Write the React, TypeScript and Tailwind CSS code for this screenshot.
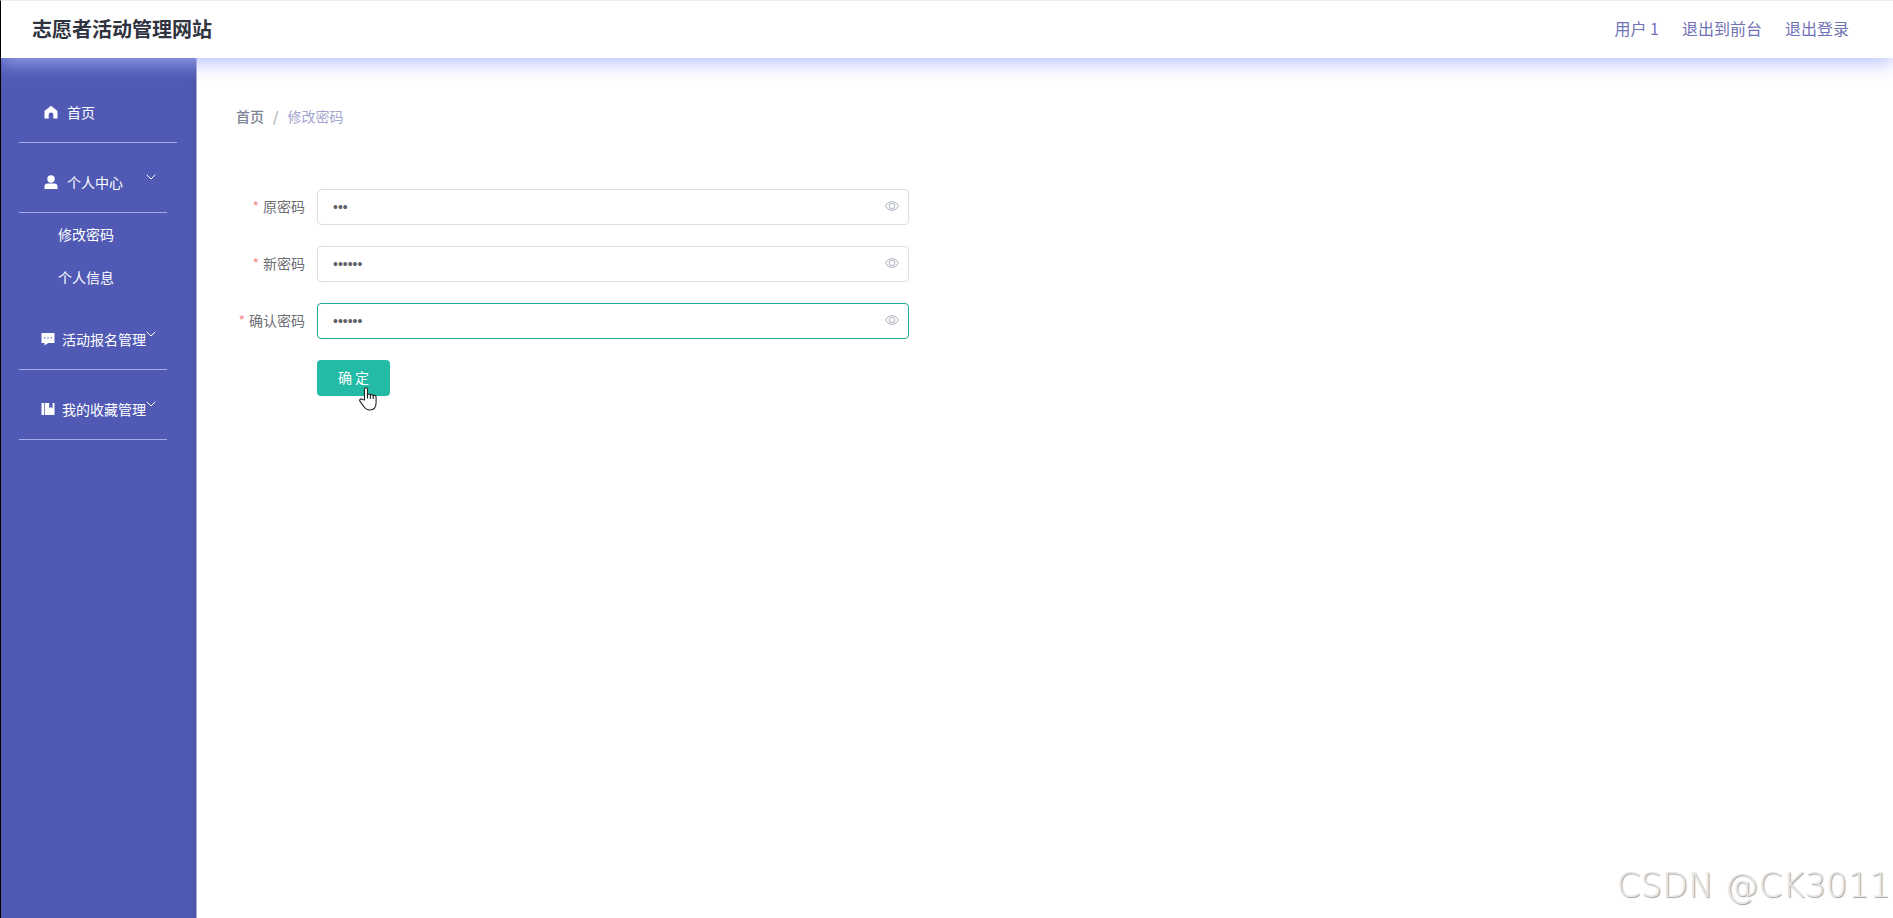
import React, { useState } from "react";
import clsx from "clsx";

const ChevronDown = () => (
  <svg viewBox="0 0 10 6" className="w-[10px] h-[6px]" fill="none" stroke="currentColor">
    <path d="M0.7 0.8 5 5l4.300-4.200" />
  </svg>
);

const HomeIcon = () => (
  <svg viewBox="0 0 14 14" className="size-3.5" fill="currentColor">
    <path d="M7 .8.5 6v7.500h4.200V9.800a2.300 2.300 0 0 1 4.600 0v3.700h4.200V6z" />
  </svg>
);

const UserIcon = () => (
  <svg viewBox="0 0 14 14" className="size-3.5" fill="currentColor">
    <circle cx="7" cy="4" r="3.700" />
    <path d="M.5 14v-2.200a3.200 3.200 0 0 1 3.200-3.200h6.600a3.200 3.200 0 0 1 3.200 3.200V14z" />
  </svg>
);

const CommentIcon = () => (
  <svg viewBox="0 0 14 14" className="size-3.5" fill="currentColor">
    <path
      fillRule="evenodd"
      d="M.5 1h13v10H7.200L3.500 13.500V11h-3zM3.200 5.200v1.200h1.200V5.200zm3.200 0v1.200h1.200V5.200zm3.200 0v1.200h1.200V5.200z"
    />
  </svg>
);

const CollectionIcon = () => (
  <svg viewBox="0 0 14 14" className="size-3.5" fill="currentColor">
    <path d="M.5 1h2.800v12H.5zM4 1h4.200v5.400l1.700-1.300 1.700 1.300V1h1.900v12H4z" />
  </svg>
);

const EyeIcon = () => (
  <svg viewBox="0 0 14 10" className="w-[14px] h-[10px]" fill="none" stroke="currentColor" strokeWidth="1.200">
    <path d="M.6 5C2.200 2 4.400.6 7 .6S11.800 2 13.400 5C11.800 8 9.600 9.400 7 9.400S2.200 8 .6 5z" />
    <circle cx="7" cy="5" r="2.700" />
  </svg>
);

const HandCursor = () => (
  <svg
    viewBox="0 0 18 24"
    className="absolute left-[42px] top-[27px] z-10 w-[18px] h-[24px] pointer-events-none"
    fill="#fff"
    stroke="#222"
    strokeWidth="1.100"
    strokeLinejoin="round"
  >
    <path d="M5.500 13V2.300c0-2 3-2 3 0V7.600c.6-1 2.700-.8 2.900.5.7-.9 2.600-.6 2.800.7.9-.8 2.900-.3 2.900 1.400v5.300c0 4.500-2.300 7.500-6.300 7.500-3.400 0-4.900-1.500-6.500-4.200L.9 14.200c-.9-1.700 1.100-3 2.400-1.700z" />
    <path fill="none" d="M8.500 7.600v4M11.400 8.100v3.700M14.200 8.800v3.200" />
  </svg>
);

const menu = [
  { title: "个人中心", icon: <UserIcon />, wide: true, children: ["修改密码", "个人信息"] },
  { title: "活动报名管理", icon: <CommentIcon />, wide: false, children: [] },
  { title: "我的收藏管理", icon: <CollectionIcon />, wide: false, children: [] },
];

const fields = [
  { id: "oldPassword", label: "原密码", initial: "123" },
  { id: "newPassword", label: "新密码", initial: "123456" },
  { id: "confirmPassword", label: "确认密码", initial: "123456" },
];

function Sidebar() {
  return (
    <aside className="w-[196px] shrink-0 border-r border-[#a3a9df] bg-[#505ab4] pl-[18px] pt-[15px] text-sm text-white shadow-[inset_-5px_0_5px_-3px_rgba(66,78,130,0.35)]">
      <nav>
        <a
          href="#home"
          className="flex h-[70px] w-[158px] items-center gap-[9px] border-b border-[#a3abea] pl-[25px] pt-2"
        >
          <HomeIcon />
          首页
        </a>
        {menu.map((item) => (
          <div key={item.title}>
            <button
              type="button"
              className={clsx(
                "flex h-[70px] w-[148px] items-center border-b border-[#a3abea] pr-[11px] pt-2",
                item.wide ? "gap-[9px] pl-[25px]" : "gap-[7px] pl-[22px]"
              )}
            >
              {item.icon}
              <span className="whitespace-nowrap">{item.title}</span>
              <span className="-ml-2 mb-[9px] grow flex justify-end">
                <ChevronDown />
              </span>
            </button>
            {item.children.length > 0 && (
              <ul className="pb-px pl-[39px]">
                {item.children.map((child) => (
                  <li key={child}>
                    <a href="#child" className="flex h-[43px] items-center pb-0.5">
                      {child}
                    </a>
                  </li>
                ))}
              </ul>
            )}
          </div>
        ))}
      </nav>
    </aside>
  );
}

function PasswordForm() {
  const [values, setValues] = useState(fields.map((f) => f.initial));
  const onChange = (index: number, value: string) => {
    setValues(values.map((v, i) => (i === index ? value : v)));
  };
  return (
    <form className="mt-[62px] flex flex-col gap-[21px]" onSubmit={(e) => e.preventDefault()}>
      {fields.map(({ id, label }, i) => (
        <div key={id} className="flex items-center">
          <label
            htmlFor={id}
            className="w-[81px] pr-3 pb-[3px] text-right text-sm whitespace-nowrap text-[#6c6e73]"
          >
            <span className="mr-1 text-[#f78989]">*</span>
            {label}
          </label>
          <div className="relative w-[36%] min-w-60">
            <input
              id={id}
              type="password"
              value={values[i]}
              onChange={(e) => onChange(i, e.target.value)}
              className={clsx(
                "block h-9 w-full rounded-[4px] border bg-white px-[15px] font-['Liberation_Sans',sans-serif] text-sm text-[#606266] outline-none",
                i === 2 ? "border-[#22a98f]" : "border-[#dcdfe6]"
              )}
            />
            <button
              type="button"
              aria-label="显示密码"
              className="absolute right-[10px] top-3 text-[#c0c4cc]"
            >
              <EyeIcon />
            </button>
          </div>
        </div>
      ))}
      <div className="relative ml-[81px] self-start">
        <button type="submit" className="block h-9 w-[73px] rounded-[4px] bg-[#23bba6] pb-0.5 text-sm text-white">
          确 定
        </button>
        <HandCursor />
      </div>
    </form>
  );
}

export default function App() {
  return (
    <div className="relative flex min-h-screen flex-col overflow-hidden border-l border-l-black border-t border-t-[#eeeeee] bg-white font-['Noto_Sans_CJK_SC','Noto_Sans',sans-serif]">
      <header className="relative z-10 flex h-[57px] items-center justify-between bg-white pb-0.5 pl-[31px] pr-11 shadow-[0_4px_20px_rgba(171,181,255,0.9)]">
        <h1 className="text-xl font-bold text-[#303340]">志愿者活动管理网站</h1>
        <div className="flex gap-[23px] pb-0.5 text-base text-[#7073b6]">
          <span>用户 1</span>
          <a href="#front">退出到前台</a>
          <a href="#logout">退出登录</a>
        </div>
      </header>
      <div className="flex grow">
        <Sidebar />
        <main className="grow pl-[39px] pr-3 pt-[47px]">
          <nav className="flex h-[22px] items-center text-sm text-[#a3a5cf]">
            <a href="#home" className="font-medium text-[#808296]">
              首页
            </a>
            <span className="mx-[9px] font-medium text-[#a8abb5]">/</span>
            <span>修改密码</span>
          </nav>
          <PasswordForm />
        </main>
      </div>
      <div className="absolute bottom-[13px] right-[2px] font-['DejaVu_Sans',sans-serif] text-[34px] font-extralight leading-10 text-[#e6e6e6] [text-shadow:1px_1px_1px_#a0a0a0]">
        CSDN @CK3011
      </div>
    </div>
  );
}
